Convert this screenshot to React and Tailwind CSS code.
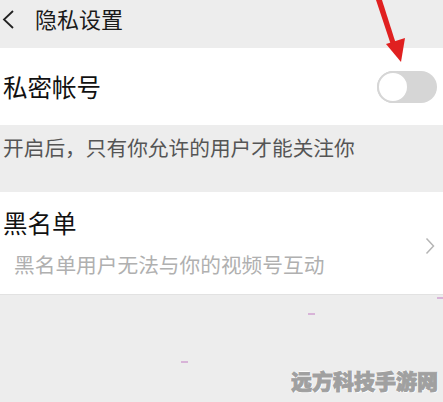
import React from "react";

const FONT = { fontFamily: '"Noto Sans CJK SC", "Noto Sans", sans-serif' };

const Toggle = () => (
  <div className="w-[60px] h-[32px] rounded-full bg-[#d6d6d6] flex items-center">
    <div className="w-[32px] h-[32px] rounded-full bg-white border-2 border-[#d6d6d6]" />
  </div>
);

export default function App() {
  return (
    <div className="relative w-[443px] h-[402px] overflow-hidden bg-[#ededed]" style={FONT}>
      {/* header */}
      <div className="h-[48px] flex items-start pt-[7px] pl-[2px] text-[#1a1a1a]">
        <svg width="13" height="20" viewBox="0 0 13 20" fill="none" className="mt-[2px]">
          <path d="M11 2 L2 10.5 L11 19" stroke="#222" strokeWidth="1.8" />
        </svg>
        <span className="ml-[20px] text-[22px] leading-none">隐私设置</span>
      </div>

      {/* private account */}
      <div className="h-[77px] bg-white flex items-center justify-between pl-[3px] pr-[6px]">
        <span className="text-[24.5px] text-[#111] leading-none mt-[1px]">私密帐号</span>
        <Toggle />
      </div>

      <div className="h-[67px] pl-[3px] pt-[12px]">
        <span className="text-[20.7px] text-[#555] leading-none">开启后，只有你允许的用户才能关注你</span>
      </div>

      {/* blacklist */}
      <div className="h-[103px] bg-white flex items-center justify-between pl-[3px] pr-[8px] border-b border-[#e2e2e2]">
        <div className="flex flex-col">
          <span className="text-[24.5px] text-[#111] leading-none">黑名单</span>
          <span className="ml-[11px] mt-[19px] text-[20.7px] text-[#b0b0b0] leading-none">
            黑名单用户无法与你的视频号互动
          </span>
        </div>
        <svg width="10" height="18" viewBox="0 0 10 18" fill="none" className="mt-[6px]">
          <path d="M1.5 1.5 L8.5 9 L1.5 16.5" stroke="#b5b5b5" strokeWidth="1.5" />
        </svg>
      </div>

      {/* red arrow */}
      <svg className="absolute left-[360px] top-0" width="60" height="70" viewBox="0 0 60 70">
        <path d="M16 0 L22 0 L36 44 L31 45 Z" fill="#e02020" />
        <path d="M26 44 L45 38 L41 62 Z" fill="#e02020" />
      </svg>

      {/* stray marks */}
      <div className="absolute left-[308px] top-[313px] w-[7px] h-[2px] bg-[#d8b4d8]" />
      <div className="absolute left-[181px] top-[361px] w-[7px] h-[2px] bg-[#d8b4d8]" />
      <div className="absolute left-[437px] top-[297px] w-[6px] h-[2px] bg-[#d8b4d8]" />

      {/* watermark */}
      <div
        className="absolute left-[291px] top-[370px] text-[21px] font-black text-[#a0a0a0] leading-none"
        style={{
          WebkitTextStroke: "0.9px #a0a0a0",
          textShadow: "1px 0 0 #fff, -1px 0 0 #fff, 0 1px 0 #fff, 0 -1px 0 #fff, 1px 1px 1px #fff",
        }}
      >
        远方科技手游网
      </div>
    </div>
  );
}
